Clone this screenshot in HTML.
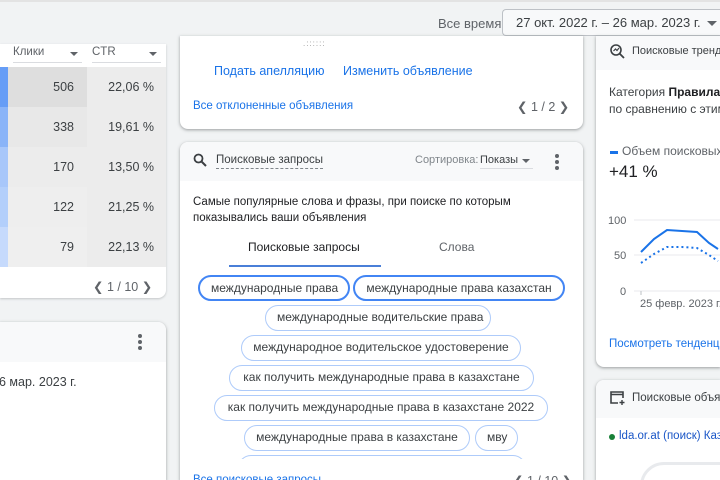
<!DOCTYPE html>
<html style="width:720px;height:480px;overflow:hidden"><head><meta charset="utf-8"><style>
*{margin:0;padding:0;box-sizing:border-box}
body{width:720px;height:480px;overflow:hidden;background:#f1f3f4;font-family:"Liberation Sans",sans-serif;color:#3c4043;position:relative}
.a{position:absolute}
.card{position:absolute;background:#fff;border-radius:8px;box-shadow:0 1px 2px rgba(60,64,67,.3),0 1px 3px 1px rgba(60,64,67,.15);overflow:hidden}
.link{color:#1a73e8}
.chip{position:absolute;height:26px;border:1.5px solid #aecbfa;border-radius:13px;font-size:12px;line-height:23px;padding:0 11px;white-space:nowrap;color:#3c4043;background:#fff}
.chip.s{border:2px solid #4285f4;line-height:22px}
.row{position:absolute;left:0;width:166px;height:40px;font-size:12.5px}
.row .b{position:absolute;left:0;top:0;width:8px;height:100%}
.row .c1{position:absolute;left:8px;top:0;width:79px;height:100%;text-align:right;padding-right:13px;line-height:40px}
.row .c2{position:absolute;left:87px;top:0;width:79px;height:100%;text-align:right;padding-right:12px;line-height:40px;background:#ececec}
</style></head><body>
<div class="a" style="left:0;top:0;width:720px;height:2px;background:#e3e3e3"></div>
<div class="a" style="left:438px;top:16px;font-size:13px;color:#5f6368">Все время</div>
<div class="a" style="left:502px;top:9px;width:218px;height:27px;border:1px solid #bdc1c6;border-right:none;border-radius:4px 0 0 4px;background:#f8f9fa;font-size:13px;line-height:26px;padding-left:13px;color:#3c4043;white-space:nowrap;overflow:hidden">27 окт. 2022 г. – 26 мар. 2023 г.</div>
<div class="a" style="left:707px;top:21px;width:0;height:0;border-left:5px solid transparent;border-right:5px solid transparent;border-top:5px solid #5f6368"></div>

<div class="card" style="left:0;top:44px;width:166px;height:254px;border-radius:0 0 8px 0;box-shadow:0 1px 2px rgba(60,64,67,.25)">
  <div style="position:absolute;left:0;top:0;width:166px;height:254px">
    <div class="a" style="left:13px;top:2px;width:69px;height:17px;border-bottom:1px solid #dadce0;font-size:11.5px;color:#5f6368">Клики</div>
    <div class="a" style="left:70px;top:8px;border-left:4px solid transparent;border-right:4px solid transparent;border-top:4px solid #5f6368"></div>
    <div class="a" style="left:92px;top:2px;width:69px;height:17px;border-bottom:1px solid #dadce0;font-size:11.5px;color:#5f6368">CTR</div>
    <div class="a" style="left:149px;top:8px;border-left:4px solid transparent;border-right:4px solid transparent;border-top:4px solid #5f6368"></div>
    <div class="row" style="top:23px"><div class="b" style="background:#669df6"></div><div class="c1" style="background:#dedede">506</div><div class="c2">22,06 %</div></div>
    <div class="row" style="top:63px"><div class="b" style="background:#8ab4f8"></div><div class="c1" style="background:#e8e8e8">338</div><div class="c2">19,61 %</div></div>
    <div class="row" style="top:103px"><div class="b" style="background:#a8c7fa"></div><div class="c1" style="background:#ececec">170</div><div class="c2">13,50 %</div></div>
    <div class="row" style="top:143px"><div class="b" style="background:#b3cffb"></div><div class="c1" style="background:#eeeeee">122</div><div class="c2">21,25 %</div></div>
    <div class="row" style="top:183px"><div class="b" style="background:#c6dafc"></div><div class="c1" style="background:#efefef">79</div><div class="c2">22,13 %</div></div>
    <div class="a" style="left:93px;top:235px;font-size:12.5px;color:#5f6368">❮ 1 / 10 ❯</div>
  </div>
</div>

<div class="card" style="left:0;top:322px;width:166px;height:158px;border-radius:0 8px 0 0">
  <div class="a" style="left:0;top:0;width:166px;height:40px;background:#f8f9fa"></div>
  <div class="a" style="left:138px;top:12px;width:4px;line-height:5px;font-size:0">
    <div style="width:4px;height:4px;border-radius:2px;background:#5f6368;margin-bottom:2px"></div><div style="width:4px;height:4px;border-radius:2px;background:#5f6368;margin-bottom:2px"></div><div style="width:4px;height:4px;border-radius:2px;background:#5f6368"></div>
  </div>
  <div class="a" style="left:-1px;top:53px;font-size:12.5px">6 мар. 2023 г.</div>
</div>

<div class="card" style="left:180px;top:36px;width:403px;height:93px;border-radius:0 0 8px 8px">
  <div class="a" style="left:123px;top:3px;font-size:8px;color:#999;letter-spacing:1px">.::::::</div>
  <div class="a link" style="left:34px;top:28px;font-size:12.5px">Подать апелляцию</div>
  <div class="a link" style="left:163px;top:28px;font-size:12.5px">Изменить объявление</div>
  <div class="a link" style="left:13px;top:64px;font-size:11.5px">Все отклоненные объявления</div>
  <div class="a" style="left:337px;top:63px;font-size:12.5px;color:#5f6368">❮ 1 / 2 ❯</div>
</div>

<div class="card" style="left:180px;top:142px;width:403px;height:338px;border-radius:8px 8px 0 0">
  <div class="a" style="left:0;top:0;width:403px;height:39px;background:#f8f9fa"></div>
  <svg class="a" style="left:13px;top:11px" width="14" height="14" viewBox="0 0 14 14"><circle cx="5.5" cy="5.5" r="4" fill="none" stroke="#3c4043" stroke-width="1.8"/><path d="M8.5 8.5L13 13" stroke="#3c4043" stroke-width="2"/></svg>
  <div class="a" style="left:36px;top:11px;font-size:11.5px;border-bottom:1px dashed #80868b;line-height:15px">Поисковые запросы</div>
  <div class="a" style="left:235px;top:12px;font-size:11px;color:#80868b">Сортировка:</div>
  <div class="a" style="left:300px;top:11px;width:53px;font-size:11px;border-bottom:1px solid #dadce0;line-height:15px">Показы</div>
  <div class="a" style="left:342px;top:17px;border-left:4px solid transparent;border-right:4px solid transparent;border-top:4px solid #5f6368"></div>
  <div class="a" style="left:375px;top:12px">
    <div style="width:4px;height:4px;border-radius:2px;background:#5f6368;margin-bottom:2px"></div><div style="width:4px;height:4px;border-radius:2px;background:#5f6368;margin-bottom:2px"></div><div style="width:4px;height:4px;border-radius:2px;background:#5f6368"></div>
  </div>
  <div class="a" style="left:13px;top:52px;font-size:11.5px;line-height:16px;color:#202124">Самые популярные слова и фразы, при поиске по которым<br>показывались ваши объявления</div>
  <div class="a" style="left:68px;top:98px;font-size:12px;color:#202124">Поисковые запросы</div>
  <div class="a" style="left:259px;top:98px;font-size:12px;color:#5f6368">Слова</div>
  <div class="a" style="left:49px;top:123px;width:152px;height:2px;background:#4a7fd8"></div>
  <div class="chip s" style="left:18px;top:133px;width:152px;text-align:center">международные права</div>
  <div class="chip s" style="left:173px;top:133px;width:212px;text-align:center">международные права казахстан</div>
  <div class="chip" style="left:85px;top:163px;width:226px;text-align:center">международные водительские права</div>
  <div class="chip" style="left:61px;top:193px;width:280px;text-align:center">международное водительское удостоверение</div>
  <div class="chip" style="left:49px;top:223px;width:305px;text-align:center">как получить международные права в казахстане</div>
  <div class="chip" style="left:34px;top:253px;width:334px;text-align:center">как получить международные права в казахстане 2022</div>
  <div class="chip" style="left:64px;top:283px;width:226px;text-align:center">международные права в казахстане</div>
  <div class="chip" style="left:295px;top:283px;width:43px;text-align:center">мву</div>
  <div class="chip" style="left:58px;top:313px;width:288px"></div>
  <div class="a" style="left:0;top:317px;width:403px;height:21px;background:#fff"></div>
  <div class="a link" style="left:13px;top:332px;font-size:11.5px">Все поисковые запросы</div>
  <div class="a" style="left:333px;top:331px;font-size:12.5px;color:#5f6368">❮ 1 / 10 ❯</div>
</div>

<div class="card" style="left:596px;top:36px;width:124px;height:331px;border-radius:0 0 0 8px">
  <div class="a" style="left:0;top:0;width:124px;height:34px;background:#f8f9fa"></div>
  <svg class="a" style="left:13px;top:7px" width="16" height="16" viewBox="0 0 16 16"><circle cx="7" cy="7" r="5" fill="none" stroke="#3c4043" stroke-width="1.6"/><path d="M10.5 10.5L15 15" stroke="#3c4043" stroke-width="1.8"/><path d="M4.5 8L6.5 6L8 7.5L10 5" stroke="#3c4043" stroke-width="1.2" fill="none"/></svg>
  <div class="a" style="left:36px;top:9px;font-size:11px;white-space:nowrap">Поисковые тренды</div>
  <div class="a" style="left:13px;top:48px;font-size:12px;white-space:nowrap;line-height:17px">Категория <b style="color:#202124">Правила</b><br>по сравнению с этим</div>
  <div class="a" style="left:14px;top:115px;width:8px;height:3px;background:#1a73e8"></div>
  <div class="a" style="left:26px;top:108px;font-size:12px;white-space:nowrap;color:#5f6368">Объем поисковых</div>
  <div class="a" style="left:13px;top:126px;font-size:17px;color:#202124">+41 %</div>
  <svg class="a" style="left:0;top:170px" width="124" height="110" viewBox="0 0 124 110">
    <g font-family="Liberation Sans" font-size="11" fill="#5f6368">
      <text x="12" y="18">100</text><text x="18" y="53">50</text><text x="24" y="89">0</text>
      <text x="44" y="101">25 февр. 2023 г.</text>
    </g>
    <path d="M38 14H124M38 49H124M38 85H124" stroke="#e8eaed" stroke-width="1"/>
    <path d="M45 85v4" stroke="#bdc1c6"/>
    <path d="M45 46L58 33L71 24L86 25L101 26L113 37L122 43" fill="none" stroke="#1a73e8" stroke-width="2"/>
    <path d="M45 57L58 48L71 41L86 41L101 42L113 49L122 55" fill="none" stroke="#1a73e8" stroke-width="2" stroke-dasharray="2 3"/>
  </svg>
  <div class="a link" style="left:13px;top:302px;font-size:11.5px;white-space:nowrap">Посмотреть тенденции</div>
</div>

<div class="card" style="left:596px;top:380px;width:124px;height:100px;border-radius:8px 0 0 0">
  <div class="a" style="left:0;top:0;width:124px;height:38px;background:#f8f9fa"></div>
  <svg class="a" style="left:13px;top:10px" width="16" height="15" viewBox="0 0 16 15"><path d="M9 13H2V2h12v6" fill="none" stroke="#3c4043" stroke-width="1.6"/><path d="M2 4.5h12" stroke="#3c4043" stroke-width="1.6"/><path d="M13 10v5M10.5 12.5h5" stroke="#3c4043" stroke-width="1.4"/></svg>
  <div class="a" style="left:36px;top:12px;font-size:11.5px;white-space:nowrap">Поисковые объявления</div>
  <div class="a" style="left:13px;top:54px;width:6px;height:6px;border-radius:3px;background:#188038"></div>
  <div class="a link" style="left:23px;top:50px;font-size:11.5px;white-space:nowrap;color:#1a56c7">lda.or.at (поиск) Казахстан</div>
  <div class="a" style="left:44px;top:82px;width:140px;height:60px;border:3px solid #e8eaed;border-radius:24px"></div>
</div>
</body></html>
